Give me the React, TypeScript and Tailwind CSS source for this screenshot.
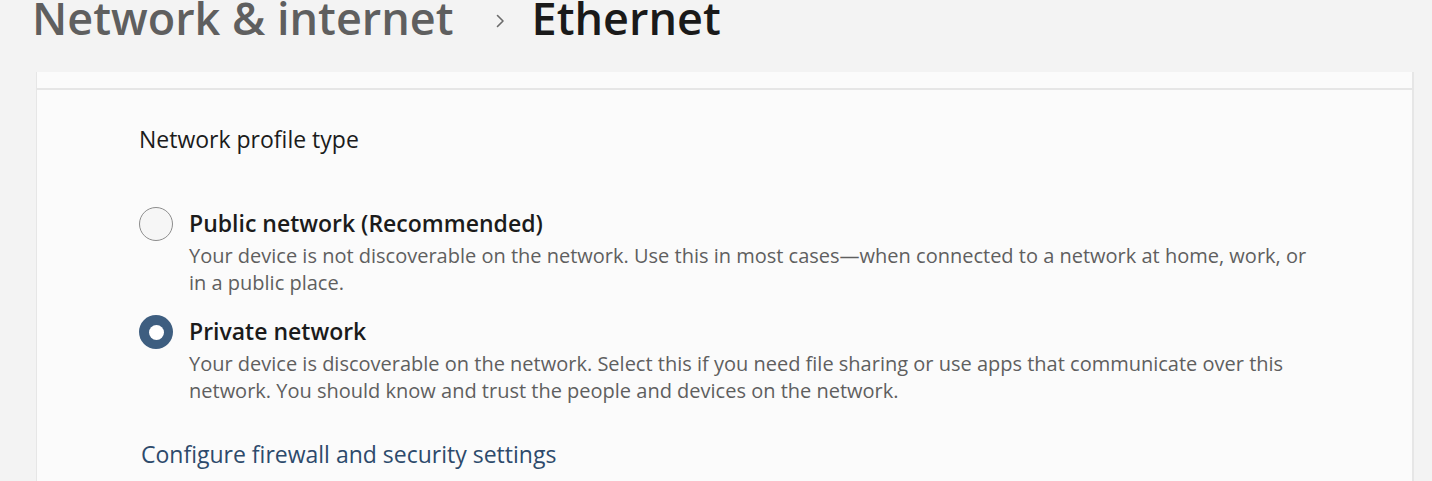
import React from "react";

const font = { fontFamily: '"Open Sans", "Noto Sans", sans-serif' };

// Radio option row
const RadioOption = ({
  checked,
  title,
  description,
}: {
  checked?: boolean;
  title: string;
  description: string;
}) => {
  return (
    <div className="flex items-start gap-[16px]">
      <div className="-mt-[1px]">
        {checked ? (
          <div className="w-[34px] h-[34px] rounded-full bg-[#3e5e80] flex items-center justify-center">
            <div className="w-[15px] h-[15px] rounded-full bg-white" />
          </div>
        ) : (
          <div className="w-[34px] h-[34px] rounded-full border-[1.5px] border-[#8d8d8d] bg-[#f6f6f6]" />
        )}
      </div>
      <div className="w-[1135px]">
        <div className="text-[23px] leading-[30px] font-semibold text-[#1b1b1b]">{title}</div>
        <p className="mt-[4px] text-[20px] leading-[27px] text-[#5f5f5f]">{description}</p>
      </div>
    </div>
  );
};

const App = () => {
  return (
    <div className="w-[1432px] h-[481px] overflow-hidden bg-[#f3f3f3] flex flex-col" style={font}>
      <h1 className="pl-[32px] text-[45px] leading-[36px] font-semibold text-[#5f5f5f] flex items-center">
        <span>Network &amp; internet</span>
        <svg className="ml-[42px] mr-[27px] translate-y-[3px]" width="9" height="14" viewBox="0 0 9 14" fill="none">
          <path d="M1.5 1.5 L7 7 L1.5 12.5" stroke="#6b6b6b" strokeWidth="1.6" strokeLinecap="round" strokeLinejoin="round" />
        </svg>
        <span className="text-[#1a1a1a]">Ethernet</span>
      </h1>

      <div className="ml-[36px] mt-[36px] w-[1378px] flex-1 bg-[#fbfbfb] border-l border-r-2 border-[#e6e6e6]">
        <div className="h-[18px] border-b-2 border-[#e6e6e6]" />
        <div className="pl-[102px] pt-[34px]">
          <div className="text-[23px] leading-[30px] text-[#1b1b1b]">Network profile type</div>

          <div className="mt-[54px] flex flex-col gap-[20px]">
            <RadioOption
              title="Public network (Recommended)"
              description="Your device is not discoverable on the network. Use this in most cases—when connected to a network at home, work, or in a public place."
            />
            <RadioOption
              checked
              title="Private network"
              description="Your device is discoverable on the network. Select this if you need file sharing or use apps that communicate over this network. You should know and trust the people and devices on the network."
            />
          </div>

          <a className="mt-[35px] ml-[2px] block text-[23px] leading-[30px] text-[#2d4a6b]">
            Configure firewall and security settings
          </a>
        </div>
      </div>
    </div>
  );
};

export default App;
